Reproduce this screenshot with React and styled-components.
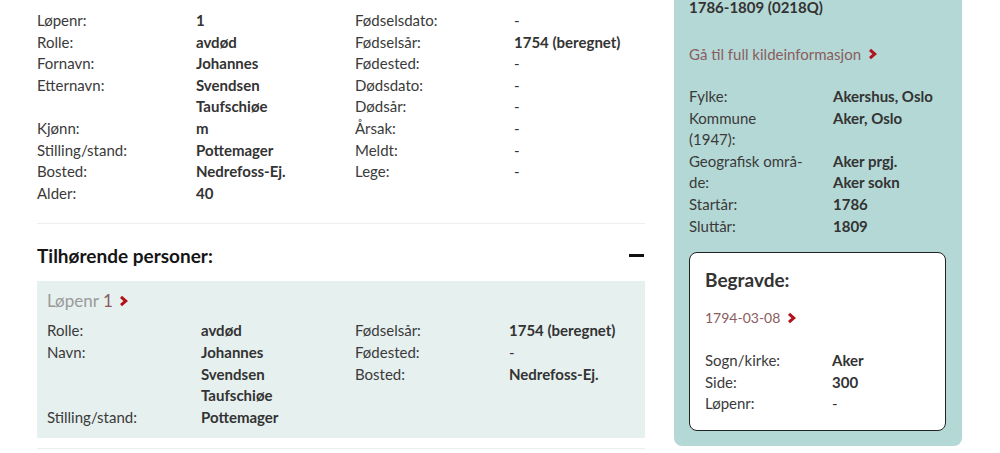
import React from 'react'
import styled, { createGlobalStyle } from 'styled-components'

const GlobalStyle = createGlobalStyle`
  html, body {
    margin: 0;
    padding: 0;
    background: #fff;
    font-family: Lato, "Liberation Sans", sans-serif;
    font-size: 15px;
    color: #333;
  }
`

const Page = styled.div`
  display: flex;
  align-items: flex-start;
  gap: 29px;
  padding: 0 38px 0 37px;
  height: 453px;
  overflow: hidden;
`

const Main = styled.div`
  width: 608px;
  flex-shrink: 0;
`

const Sidebar = styled.aside`
  flex: 1;
  margin-top: -4px;
  padding: 0 16px 15px 15px;
  background: #b4d8d5;
  border-radius: 0 0 8px 8px;
`

const Grid = styled.div`
  display: grid;
  grid-template-columns: ${p => p.cols};
  line-height: 21.6px;
  padding: ${p => p.pad || '0'};
`

const Label = styled.div`
  color: #3a3a3a;
`

const Value = styled.div`
  font-weight: 700;
  color: #333;
`

const Pair = styled.div`
  display: grid;
  grid-template-columns: ${p => p.labelWidth} 1fr;
`

const Column = styled.div``

const Divider = styled.hr`
  border: 0;
  border-top: 1px solid #eeeeee;
  margin: ${p => p.margin};
`

const SectionHead = styled.div`
  display: flex;
  align-items: center;
  justify-content: space-between;
  height: 26px;
  margin-bottom: 13px;
`

const Heading = styled.h2`
  margin: 0;
  font-size: 19px;
  font-weight: 700;
  color: #151515;
`

const Minus = styled.span`
  width: 15px;
  height: 3px;
  background: #111;
  margin-right: 1px;
`

const PersonBox = styled.div`
  background: #e6f0ef;
  padding: 9px 10px 10px;
`

const PersonLink = styled.div`
  display: flex;
  align-items: center;
  gap: 6px;
  font-size: 17px;
  line-height: 22px;
  color: #9a9a9a;
  margin-bottom: 8px;
`

const Num = styled.span`
  color: #8a5c60;
  margin-left: -2px;
`

const TextLink = styled.div`
  display: flex;
  align-items: center;
  gap: 7px;
  color: #8a5c60;
  font-size: ${p => p.size || '15px'};
  line-height: 22px;
  margin-top: ${p => p.top || '0'};
`

const SourceTitle = styled.div`
  font-weight: 700;
  line-height: 22px;
  color: #333;
`

const Card = styled.div`
  background: #fff;
  border: 1px solid #222;
  border-radius: 8px;
  padding: 14px 15px 15px;
`

const CardTitle = styled.h3`
  margin: 0 0 14px;
  font-size: 19px;
  font-weight: 700;
  line-height: 26px;
  color: #333;
`

const Chevron = () => (
  <svg width="9" height="12" viewBox="0 0 9 12">
    <polyline points="2,1.8 6.8,6 2,10.2" fill="none" stroke="#b3121b" strokeWidth="3" />
  </svg>
)

const Rows = ({ rows, labelWidth }) => (
  <Column>
    {rows.map(([label, value], i) => (
      <Pair key={i} labelWidth={labelWidth}>
        <Label>{label}</Label>
        <Value>{value}</Value>
      </Pair>
    ))}
  </Column>
)

const mainLeft = [
  ['Løpenr:', '1'],
  ['Rolle:', 'avdød'],
  ['Fornavn:', 'Johannes'],
  ['Etternavn:', <>Svendsen<br />Taufschiøe</>],
  ['Kjønn:', 'm'],
  ['Stilling/stand:', 'Pottemager'],
  ['Bosted:', 'Nedrefoss-Ej.'],
  ['Alder:', '40'],
]

const dash = <span style={{ fontWeight: 400 }}>-</span>

const mainRight = [
  ['Fødselsdato:', dash],
  ['Fødselsår:', '1754 (beregnet)'],
  ['Fødested:', dash],
  ['Dødsdato:', dash],
  ['Dødsår:', dash],
  ['Årsak:', dash],
  ['Meldt:', dash],
  ['Lege:', dash],
]

const personLeft = [
  ['Rolle:', 'avdød'],
  ['Navn:', <>Johannes<br />Svendsen<br />Taufschiøe</>],
  ['Stilling/stand:', 'Pottemager'],
]

const personRight = [
  ['Fødselsår:', '1754 (beregnet)'],
  ['Fødested:', dash],
  ['Bosted:', 'Nedrefoss-Ej.'],
]

const sourceRows = [
  ['Fylke:', 'Akershus, Oslo'],
  ['Kommune', 'Aker, Oslo'],
  ['(1947):', ''],
  ['Geografisk områ-', 'Aker prgj.'],
  ['de:', 'Aker sokn'],
  ['Startår:', '1786'],
  ['Sluttår:', '1809'],
]

const burialRows = [
  ['Sogn/kirke:', 'Aker'],
  ['Side:', '300'],
  ['Løpenr:', dash],
]

export default function App() {
  return (
    <>
      <GlobalStyle />
      <Page>
        <Main>
          <Grid cols="318px 1fr" pad="10px 0 0">
            <Rows rows={mainLeft} labelWidth="159px" />
            <Rows rows={mainRight} labelWidth="159px" />
          </Grid>
          <Divider margin="19px 0 18px" />
          <SectionHead>
            <Heading>Tilhørende personer:</Heading>
            <Minus />
          </SectionHead>
          <PersonBox>
            <PersonLink>
              Løpenr <Num>1</Num> <Chevron />
            </PersonLink>
            <Grid cols="308px 1fr">
              <Rows rows={personLeft} labelWidth="154px" />
              <Rows rows={personRight} labelWidth="154px" />
            </Grid>
          </PersonBox>
          <Divider margin="10px 0 0" />
        </Main>
        <Sidebar>
          <SourceTitle>1786-1809 (0218Q)</SourceTitle>
          <TextLink top="25px">
            Gå til full kildeinformasjon <Chevron />
          </TextLink>
          <Grid cols="1fr" pad="21px 0 15px">
            <Rows rows={sourceRows} labelWidth="144px" />
          </Grid>
          <Card>
            <CardTitle>Begravde:</CardTitle>
            <TextLink size="14px">
              1794-03-08 <Chevron />
            </TextLink>
            <Grid cols="1fr" pad="21px 0 0">
              <Rows rows={burialRows} labelWidth="127px" />
            </Grid>
          </Card>
        </Sidebar>
      </Page>
    </>
  )
}
